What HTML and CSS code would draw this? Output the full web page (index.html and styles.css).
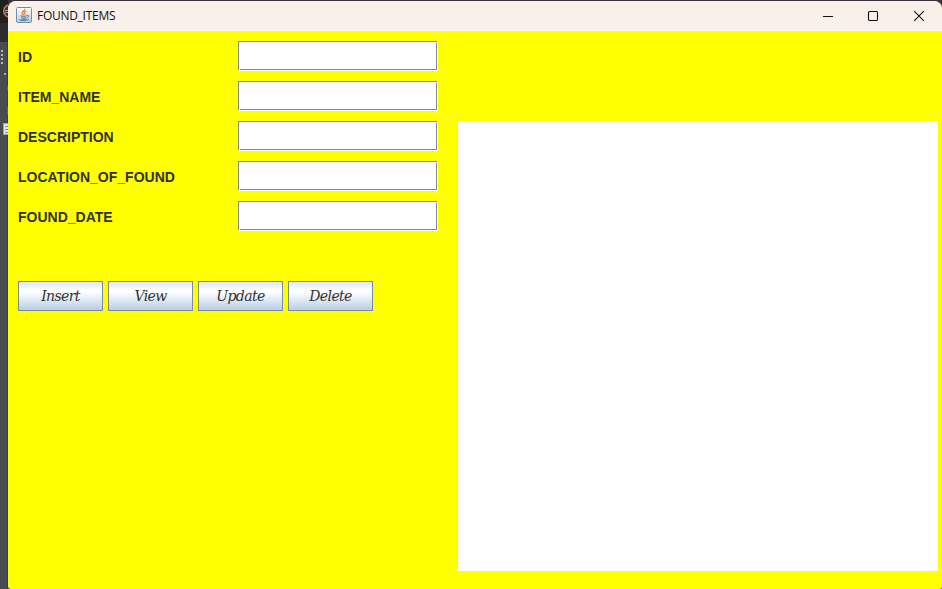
FILE: index.html
```
<!DOCTYPE html>
<html lang="en">
<head>
<meta charset="utf-8">
<title>FOUND_ITEMS</title>
<link rel="stylesheet" href="styles.css">
</head>
<body>
<div class="desktop">
  <svg class="backdrop" width="8" height="589" viewBox="0 0 8 589">
    <rect width="8" height="23" fill="#1f1f20"/>
    <rect y="23" width="8" height="19" fill="#2c2c2d"/>
    <rect y="42" width="8" height="547" fill="#484c4f"/>
    <rect x="7" y="42" width="1" height="547" fill="#3b3e40"/>
    <circle cx="10" cy="11" r="6.3" fill="#34345c" stroke="#c9793a" stroke-width="1.5"/>
    <path d="M5 10.500h3M5 12.500h3" stroke="#b8b6c6" stroke-width=".8"/>
    <path d="M2 50v14" stroke="#b9b9b9" stroke-width="2" stroke-dasharray="2 2"/>
    <rect x="4" y="73" width="2" height="2" fill="#aaa"/>
    <path d="M7.500 86v5M7.500 107v8" stroke="#5b5e60"/>
    <rect x="3.500" y="123.500" width="6" height="11" fill="#dfe4e6" stroke="#a3a38f"/>
    <path d="M5 126.500h3M5 129.500h3M5 132.500h3" stroke="#7894a5"/>
  </svg>
  <main class="window">
    <header class="titlebar">
      <svg class="app-icon" width="16" height="16" viewBox="0 0 16 16">
        <defs><linearGradient id="tile" x2="0" y2="1"><stop stop-color="#fff"/><stop offset=".5" stop-color="#dce5ed"/><stop offset="1" stop-color="#b6c9da"/></linearGradient></defs>
        <rect x=".5" y=".5" width="15" height="15" rx="1" fill="url(#tile)" stroke="#718fa8"/>
        <path d="M8.800 1.700C9.500 4 5.500 4.200 6.200 6.300L7.600 8.300M10.400 4.200C7.800 5 7.800 6 8.800 7.700" fill="none" stroke="#ec8230" stroke-width="1.300"/>
        <path d="M4.500 8.800c2 .7 4.300.6 6.200 0M5.200 10.700c1.600.5 3.400.5 4.800 0M11 8.400c2.600-.4 2 2-.3 2.600M3.500 12.300c-1.300 1.500 7.500 1.500 9 .1M5.500 12.200h4.600" fill="none" stroke="#426f96" stroke-width=".95"/>
      </svg>
      <h1 class="title">FOUND_ITEMS</h1>
      <div class="controls">
        <svg width="46" height="29" viewBox="0 0 46 29"><path d="M15 14.500h10" stroke="#111"/></svg>
        <svg width="46" height="29" viewBox="0 0 46 29"><rect x="14.500" y="9.500" width="9" height="9" rx="1" fill="none" stroke="#111" stroke-width="1.100"/></svg>
        <svg width="46" height="29" viewBox="0 0 46 29"><path d="M14.200 9.200l9.600 9.600M23.800 9.200l-9.600 9.600" stroke="#111" stroke-width="1.100"/></svg>
      </div>
    </header>
    <div class="content">
      <form class="form">
        <label class="row"><span class="label">ID</span><input class="field" type="text"></label>
        <label class="row"><span class="label">ITEM_NAME</span><input class="field" type="text"></label>
        <label class="row"><span class="label">DESCRIPTION</span><input class="field" type="text"></label>
        <label class="row"><span class="label">LOCATION_OF_FOUND</span><input class="field" type="text"></label>
        <label class="row"><span class="label">FOUND_DATE</span><input class="field" type="text"></label>
        <div class="actions">
          <button type="button">Insert</button>
          <button type="button">View</button>
          <button type="button">Update</button>
          <button type="button">Delete</button>
        </div>
      </form>
      <section class="output"></section>
    </div>
  </main>
</div>
</body>
</html>
```
FILE: styles.css
```
* { box-sizing: border-box; }
body { margin: 0; overflow: hidden; }
.desktop { display: grid; grid-template-columns: 8px 934px; height: 589px; background: #39343b; }
.backdrop { display: block; }
.window { display: flex; flex-direction: column; margin-top: 1px; height: 588px; overflow: hidden; border-radius: 8px 8px 2px 3px; background: #ff0; }
.titlebar { display: flex; align-items: center; height: 30px; flex: none; padding-left: 8px; background: #f9f1e9; }
.app-icon { flex: none; margin-bottom: 2px; }
.title { margin: 0 0 0 5px; font: 400 12px/28px "Open Sans", sans-serif; letter-spacing: -0.280px; color: #111; }
.controls { display: flex; margin-left: auto; margin-right: -4px; }
.content { display: flex; flex: 1; }
.form { display: flex; flex-direction: column; gap: 10px; width: 450px; padding: 10px; }
.row { display: grid; grid-template-columns: 220px 200px; height: 30px; }
.label { font: 700 14px/32px "Liberation Sans", Arial, sans-serif; color: #333; }
/* Etched border: grey outline with white highlights and open corners */
.field {
  width: 200px; height: 30px; margin: 0; padding: 2px 5px; border: 0; outline: 0;
  background:
    linear-gradient(#ff0, #ff0) 100% 0 / 1px 1px no-repeat,
    linear-gradient(#ff0, #ff0) 0 100% / 1px 1px no-repeat,
    linear-gradient(#7a8a99, #7a8a99) 0 0 / 199px 1px no-repeat,
    linear-gradient(#7a8a99, #7a8a99) 0 0 / 1px 29px no-repeat,
    linear-gradient(#7a8a99, #7a8a99) 198px 2px / 1px 27px no-repeat,
    linear-gradient(#7a8a99, #7a8a99) 2px 28px / 197px 1px no-repeat,
    #fff;
}
.actions { display: flex; gap: 5px; margin-top: 40px; }
.actions button { width: 85px; height: 30px; padding: 0; border: 1px solid #7a8a99; background: linear-gradient(#dde8f3 0, #fff 30%, #fff 34%, #b8cfe5 100%); color: #333; font: italic 14px/28px "DejaVu Serif", serif; letter-spacing: -0.600px; }
.output { width: 480px; height: 450px; margin-top: 90px; background: #fff; }
```
